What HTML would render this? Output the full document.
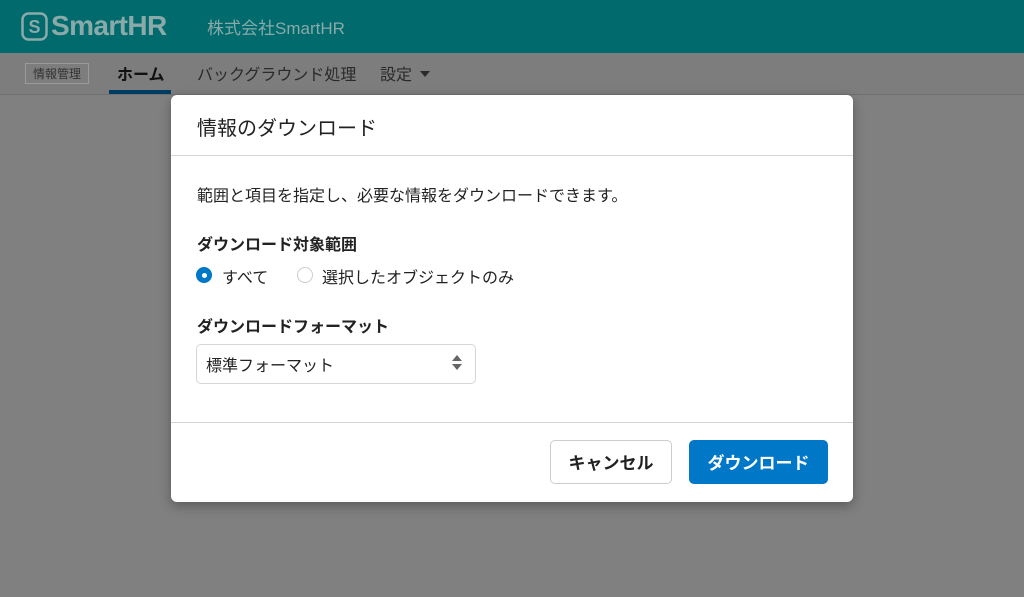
<!DOCTYPE html>
<html><head><meta charset="utf-8"><style>
body{margin:0;width:1024px;height:597px;background:#808080;font-family:"Liberation Sans","Noto Sans CJK JP",sans-serif;position:relative;overflow:hidden}
.hd{position:absolute;left:0;top:0;width:1024px;height:53px;background:#006a6c}
.nav{position:absolute;left:0;top:53px;width:1024px;height:41px;background:#7d7d7d;border-bottom:1px solid #707070}
.a{position:absolute;white-space:nowrap;line-height:1}
.modal{position:absolute;left:171px;top:95px;width:682px;height:407px;background:#fff;border-radius:6px;box-shadow:0 4px 12px rgba(0,0,0,.3)}
.btn{position:absolute;height:44px;border-radius:5px;font-size:17px;font-weight:bold;text-align:center;box-sizing:border-box}
</style></head><body>
<div class="hd">
<svg class="a" style="left:21px;top:12px" width="27" height="29" viewBox="0 0 27 29"><rect x="1.5" y="1.5" width="24" height="26" rx="6" fill="none" stroke="#8aa9a9" stroke-width="2.5"/><text x="13.5" y="21" font-size="18" font-weight="bold" text-anchor="middle" fill="#8aa9a9" font-family="Liberation Sans">S</text></svg>
<div class="a" style="left:51px;top:12px;font-size:28px;font-weight:bold;color:#8aa9a9;letter-spacing:-0.6px">SmartHR</div>
<div class="a" style="left:207px;top:20px;font-size:17px;color:#8aa9a9">株式会社SmartHR</div>
</div>
<div class="nav">
<div class="a" style="left:25px;top:10px;width:64px;height:21px;border:1px solid #9a9a9a;box-sizing:border-box;font-size:12px;line-height:21px;text-align:center;color:#333">情報管理</div>
<div class="a" style="left:117px;top:15px;font-size:16px;font-weight:bold;color:#111">ホーム</div>
<div class="a" style="left:109px;top:37px;width:62px;height:4px;background:#003d63"></div>
<div class="a" style="left:197px;top:15px;font-size:16px;color:#2a2a2a">バックグラウンド処理</div>
<div class="a" style="left:380px;top:15px;font-size:16px;color:#2a2a2a">設定</div>
<div class="a" style="left:420px;top:18px;border:5px solid transparent;border-top:6px solid #2a2a2a"></div>
</div>
<div class="modal">
<div class="a" style="left:26px;top:24px;font-size:20px;color:#222">情報のダウンロード</div>
<div class="a" style="left:0;top:60px;width:682px;height:1px;background:#d6d6d6"></div>
<div class="a" style="left:26px;top:94px;font-size:16px;color:#222">範囲と項目を指定し、必要な情報をダウンロードできます。</div>
<div class="a" style="left:26px;top:143px;font-size:16px;font-weight:bold;color:#222">ダウンロード対象範囲</div>
<div class="a" style="left:25px;top:172px;width:16px;height:16px;border-radius:50%;background:#0077c7"></div>
<div class="a" style="left:30.5px;top:177.5px;width:5px;height:5px;border-radius:50%;background:#fff"></div>
<div class="a" style="left:51px;top:176px;font-size:16px;color:#222">すべて</div>
<div class="a" style="left:126px;top:172px;width:16px;height:16px;border-radius:50%;border:1px solid #ccc;box-sizing:border-box"></div>
<div class="a" style="left:151px;top:176px;font-size:16px;color:#222">選択したオブジェクトのみ</div>
<div class="a" style="left:26px;top:225px;font-size:16px;font-weight:bold;color:#222">ダウンロードフォーマット</div>
<div class="a" style="left:25px;top:249px;width:280px;height:40px;border:1px solid #d6d6d6;border-radius:5px;box-sizing:border-box"></div>
<div class="a" style="left:35px;top:264px;font-size:16px;color:#222">標準フォーマット</div>
<div class="a" style="left:281px;top:260px;border:5px solid transparent;border-bottom:6px solid #666;border-top:0"></div>
<div class="a" style="left:281px;top:269px;border:5px solid transparent;border-top:6px solid #666;border-bottom:0"></div>
<div class="a" style="left:0;top:327px;width:682px;height:1px;background:#d6d6d6"></div>
<div class="btn a" style="left:379px;top:345px;width:122px;border:1px solid #ccc;color:#222;background:#fff;line-height:46px">キャンセル</div>
<div class="btn a" style="left:518px;top:345px;width:139px;background:#0077c7;color:#fff;line-height:48px">ダウンロード</div>
</div>
</body></html>
